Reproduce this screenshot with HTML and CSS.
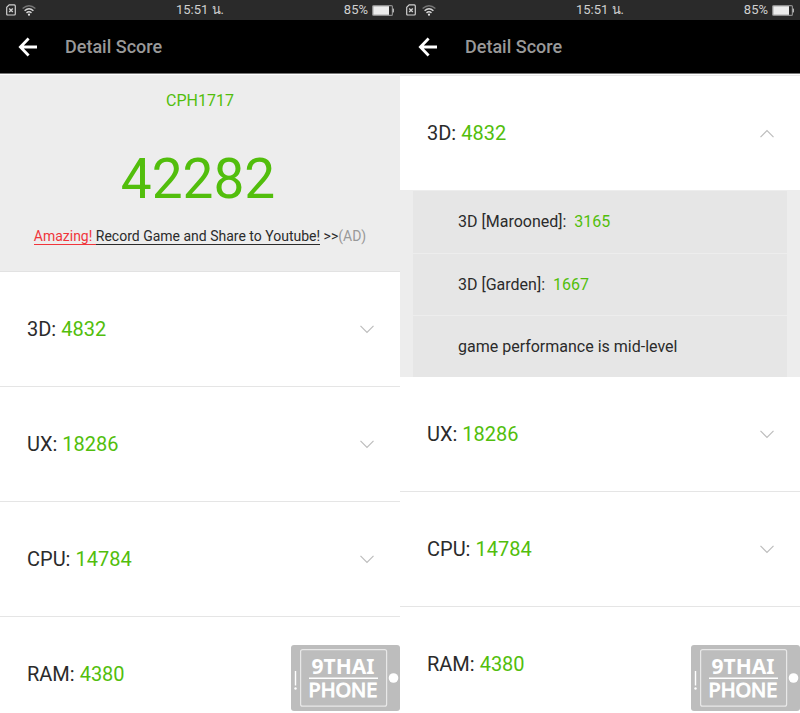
FILE: index.html
```html
<!DOCTYPE html>
<html lang="en">
<head>
    <meta charset="UTF-8">
    <meta name="viewport" content="width=device-width, initial-scale=1.0">
    <title>Detail Score</title>
    <link rel="stylesheet" href="styles.css">
</head>
<body>
    <!-- shared shapes -->
    <svg class="sprite" aria-hidden="true">
        <symbol id="sim" viewBox="0 0 10 12">
            <path d="M3.2.9H8.3Q9.3.9 9.3 1.9V10Q9.3 11 8.3 11H1.7Q.7 11 .7 10V3.3Z" fill="none" stroke="#d0d0d0" stroke-width="1.2"/>
            <path d="M3.2 4.4 6.8 8M6.8 4.4 3.2 8" stroke="#d0d0d0" stroke-width="1.4"/>
        </symbol>
        <symbol id="wifi" viewBox="0 0 14 11">
            <path d="M.6 3.6Q7-2 13.4 3.6" fill="none" stroke="#777" stroke-width="1.3"/>
            <path d="M2.6 5.7Q7 1.8 11.4 5.7" fill="none" stroke="#d8d8d8" stroke-width="1.4"/>
            <path d="M4.5 7.9Q7 5.7 9.5 7.9" fill="none" stroke="#d8d8d8" stroke-width="1.4"/>
            <circle cx="7" cy="9.7" r="1.1" fill="#e4e4e4"/>
        </symbol>
        <symbol id="battery" viewBox="0 0 22 11">
            <rect x=".6" y=".6" width="19.8" height="9.8" rx="1" fill="none" stroke="#8c8c8c" stroke-width="1.2"/>
            <rect x="1.2" y="1.2" width="15.8" height="8.6" fill="#ececec"/>
            <rect x="20.6" y="3.6" width="1.4" height="3.8" fill="#b5b5b5"/>
        </symbol>
        <symbol id="back" viewBox="0 0 20 20">
            <path d="M19 10H2.5M10.6 1.6 2.400 10l8.200 8.400" fill="none" stroke="#fff" stroke-width="2.8"/>
        </symbol>
        <symbol id="chevron" viewBox="0 0 14 9">
            <path d="M.5.8 7 7.4 13.5.8" fill="none" stroke="#bdbdbd" stroke-width="1.2"/>
        </symbol>
        <symbol id="logo" viewBox="0 0 109 66">
            <rect width="109" height="66" rx="3" fill="#bdbdbd"/>
            <rect x="9.6" y="4.6" width="86" height="56.6" rx="2" fill="none" stroke="#e8e8e8" stroke-width="1.2"/>
            <path d="M4.5 26V40.5" stroke="#fff" stroke-width="1.4"/>
            <circle cx="4.5" cy="43.5" r="1.2" fill="#fff"/>
            <circle cx="102.5" cy="33" r="4.8" fill="#fff"/>
            <path d="M18 33.200H87" stroke="#fff" stroke-width="1.6"/>
            <text class="logo-top" x="52" y="29" text-anchor="middle">9THAI</text>
            <text class="logo-bottom" x="52" y="52" text-anchor="middle">PHONE</text>
        </symbol>
    </svg>

    <main class="screens">
        <section class="phone">
            <div class="status">
                <div class="status-icons">
                    <svg class="sim"><use href="#sim"/></svg>
                    <svg class="wifi"><use href="#wifi"/></svg>
                </div>
                <span>15:51 น.</span>
                <div class="status-power">
                    <span>85%</span>
                    <svg class="battery"><use href="#battery"/></svg>
                </div>
            </div>
            <header class="topbar">
                <button class="back" aria-label="Back"><svg><use href="#back"/></svg></button>
                <h1>Detail Score</h1>
            </header>
            <div class="summary">
                <p class="model">CPH1717</p>
                <p class="total">42282</p>
                <p class="promo"><a href="#"><span class="red">Amazing! </span>Record Game and Share to Youtube!</a> &gt;&gt;<span class="ad">(AD)</span></p>
            </div>
            <button class="row"><span>3D: <b>4832</b></span><svg><use href="#chevron"/></svg></button>
            <button class="row"><span>UX: <b>18286</b></span><svg><use href="#chevron"/></svg></button>
            <button class="row"><span>CPU: <b>14784</b></span><svg><use href="#chevron"/></svg></button>
            <button class="row"><span>RAM: <b>4380</b></span><svg><use href="#chevron"/></svg></button>
            <svg class="watermark"><use href="#logo"/></svg>
        </section>

        <section class="phone">
            <div class="status">
                <div class="status-icons">
                    <svg class="sim"><use href="#sim"/></svg>
                    <svg class="wifi"><use href="#wifi"/></svg>
                </div>
                <span>15:51 น.</span>
                <div class="status-power">
                    <span>85%</span>
                    <svg class="battery"><use href="#battery"/></svg>
                </div>
            </div>
            <header class="topbar">
                <button class="back" aria-label="Back"><svg><use href="#back"/></svg></button>
                <h1>Detail Score</h1>
            </header>
            <div class="scrolled"></div>
            <button class="row open"><span>3D: <b>4832</b></span><svg><use href="#chevron"/></svg></button>
            <ul class="details">
                <li>3D [Marooned]: <b>3165</b></li>
                <li>3D [Garden]: <b>1667</b></li>
                <li>game performance is mid-level</li>
            </ul>
            <button class="row"><span>UX: <b>18286</b></span><svg><use href="#chevron"/></svg></button>
            <button class="row"><span>CPU: <b>14784</b></span><svg><use href="#chevron"/></svg></button>
            <button class="row"><span>RAM: <b>4380</b></span><svg><use href="#chevron"/></svg></button>
            <svg class="watermark"><use href="#logo"/></svg>
        </section>
    </main>
</body>
</html>
```

FILE: styles.css
```css
* {
    box-sizing: border-box;
}

body {
    margin: 0;
    font-family: Roboto, "Noto Sans", sans-serif;
    color: #2b2b2b;
    background: #fff;
}

h1, p, ul {
    margin: 0;
    padding: 0;
}

button {
    border: 0;
    padding: 0;
    background: none;
    font: inherit;
    color: inherit;
    cursor: pointer;
}

b {
    font-weight: 400;
    color: #52be0c;
}

.sprite {
    display: none;
}

.screens {
    display: grid;
    grid-template-columns: 1fr 1fr;
    height: 100vh;
    overflow: hidden;
}

.phone {
    position: relative;
    overflow: hidden;
}

/* status bar */
.status {
    display: grid;
    grid-template-columns: 1fr auto 1fr;
    align-items: center;
    height: 20px;
    padding: 0 6px;
    background: #2a2a2a;
    color: #d0d0d0;
    font-size: 13px;
    line-height: 20px;
}

.status-icons,
.status-power {
    display: flex;
    align-items: center;
    gap: 6px;
}

.status-power {
    justify-content: flex-end;
    gap: 4px;
}

.sim {
    width: 10px;
    height: 12px;
}

.wifi {
    width: 14px;
    height: 11px;
}

.battery {
    width: 22px;
    height: 11px;
}

/* title bar */
.topbar {
    display: flex;
    align-items: center;
    gap: 27px;
    height: 54px;
    padding: 0 18px;
    background: #000;
    border-bottom: 1px solid #777;
}

.back,
.back svg {
    display: block;
    width: 20px;
    height: 20px;
}

.topbar h1 {
    font-size: 18px;
    font-weight: 500;
    line-height: 20px;
    color: #999;
}

/* total score */
.summary {
    height: 198px;
    padding-top: 16px;
    background: #ededed;
    border-top: 1px solid #fff;
    border-bottom: 1px solid #e2e2e2;
    text-align: center;
}

.model {
    font-size: 16px;
    line-height: 20px;
    color: #52be0c;
}

.total {
    margin-top: 36px;
    padding-right: 4px;
    font-size: 55px;
    line-height: 64px;
    color: #52be0c;
}

.promo {
    margin-top: 15px;
    font-size: 14px;
    line-height: 20px;
    white-space: nowrap;
}

.promo a {
    color: inherit;
    text-decoration: none;
    border-bottom: 1px solid #2b2b2b;
}

.promo .red {
    color: #f0353b;
    border-bottom: 1px solid #f0353b;
}

.promo .ad {
    color: #999;
}

/* score rows */
.row {
    display: flex;
    align-items: center;
    justify-content: space-between;
    width: 100%;
    height: 115px;
    padding: 0 26px 0 27px;
    border-bottom: 1px solid #e5e5e5;
    font-size: 20px;
    line-height: 24px;
}

.row svg {
    width: 14px;
    height: 9px;
}

.row.open {
    height: 114px;
    border-bottom: 0;
}

.row.open svg {
    transform: rotate(180deg);
}

.scrolled {
    height: 2px;
    border-bottom: 1px solid #e8e8e8;
}

.details {
    padding: 0 13px;
    background: #ededed;
    border-top: 1px solid #ededed;
    list-style: none;
}

.details li {
    height: 62px;
    padding-left: 45px;
    background: #e6e6e6;
    font-size: 16px;
    line-height: 62px;
}

.details li + li {
    border-top: 1px solid #ededed;
    line-height: 61px;
}

.details b {
    margin-left: 4px;
}

.watermark {
    position: absolute;
    right: 0;
    bottom: 2px;
    width: 109px;
    height: 66px;
}

.logo-top,
.logo-bottom {
    font-family: "Noto Sans", sans-serif;
    fill: #fff;
}

.logo-top {
    font-size: 21px;
    font-weight: 700;
}

.logo-bottom {
    font-size: 20px;
    font-weight: 400;
    stroke: #fff;
    stroke-width: 1px;
}
```
